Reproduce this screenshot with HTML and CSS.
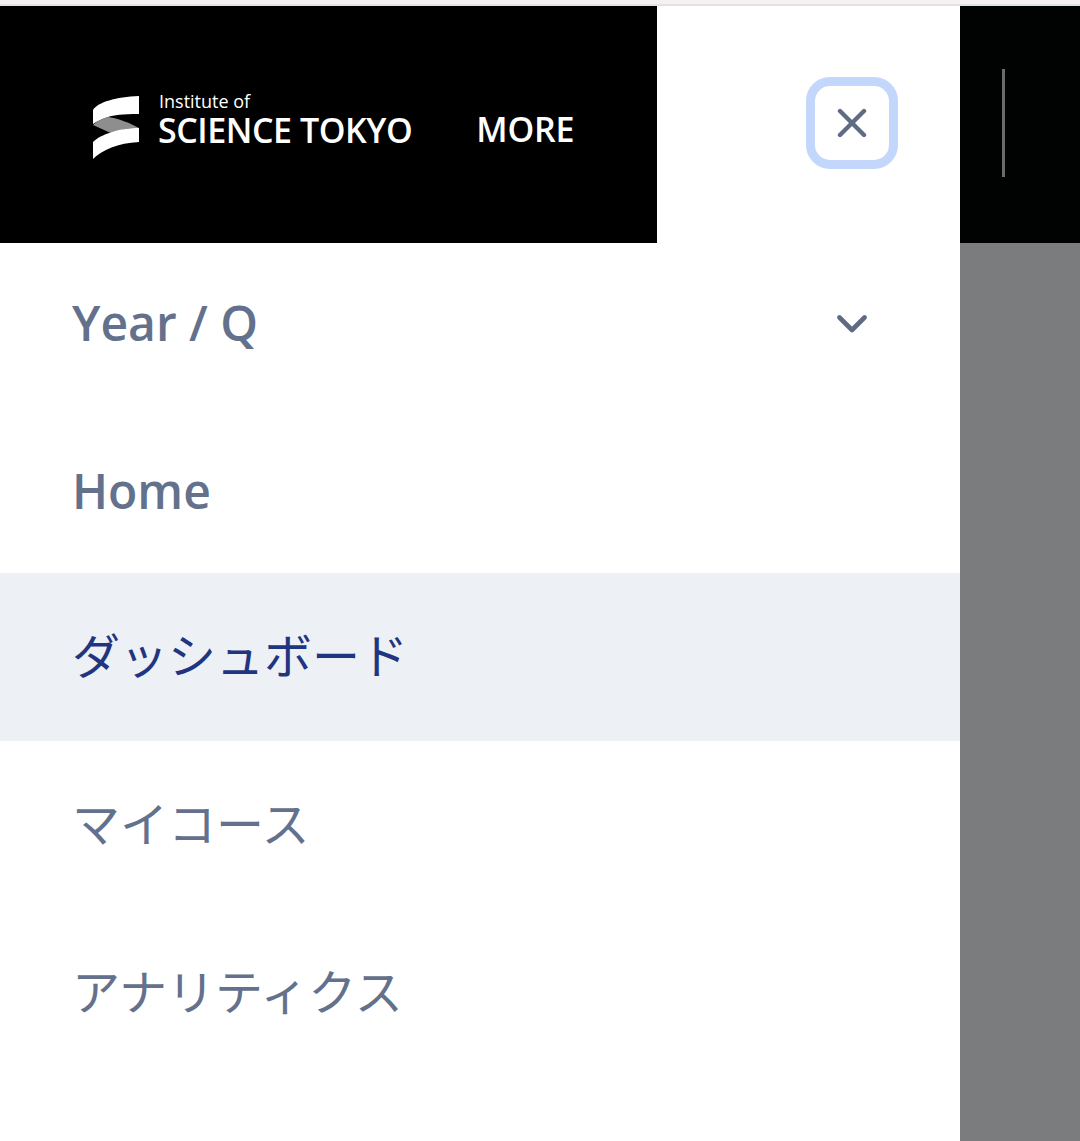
FILE: index.html
```html
<!DOCTYPE html>
<html lang="ja">
<head>
<meta charset="utf-8">
<title>Menu</title>
<link rel="stylesheet" href="styles.css">
</head>
<body>
<div class="strip"></div>
<div class="layout">
  <aside class="sidebar">
    <header class="head">
      <div class="brand">
        <svg class="mark" viewBox="0 0 48 65" width="48" height="65" aria-hidden="true">
          <path fill="#fff" d="M1 15C6 7 24 2 47 1V19C30 19 22 20 16 22C10 24 5 26 1 29Z"/>
          <path fill="#8e8e8e" d="M1 30C5 26 10 24 16 22C28 24 38 28 47 33C36 33 28 35 21 39Z"/>
          <path fill="#fff" d="M1 47C8 40 26 33 47 33V47C26 48 10 55 1 64Z"/>
        </svg>
        <div class="wordmark">
          <span class="inst">Institute of</span>
          <span class="sci">SCIENCE TOKYO</span>
        </div>
        <span class="more">MORE</span>
      </div>
      <div class="closewrap">
        <button class="close" aria-label="Close">
          <svg viewBox="0 0 30 30" width="30" height="30" aria-hidden="true"><path d="M3 3L27 27M27 3L3 27" stroke="#5f6b84" stroke-width="4.4" stroke-linecap="round" fill="none"/></svg>
        </button>
      </div>
    </header>
    <div class="row select">
      <span class="bold">Year / Q</span>
      <svg viewBox="0 0 30 18" width="30" height="18" aria-hidden="true"><path d="M2.5 2.5L15 15L27.5 2.5" stroke="#5f6b84" stroke-width="4.6" stroke-linecap="round" stroke-linejoin="round" fill="none"/></svg>
    </div>
    <nav>
      <a class="row item bold">Home</a>
      <a class="row item active">ダッシュボード</a>
      <a class="row item">マイコース</a>
      <a class="row item">アナリティクス</a>
    </nav>
  </aside>
  <div class="backdrop">
    <div class="topbar"><span class="divider"></span></div>
  </div>
</div>
</body>
</html>
```
FILE: styles.css
```css
* { box-sizing: border-box; }
html, body { margin: 0; height: 100%; overflow: hidden; }
body {
  width: 1080px;
  height: 1141px;
  background: #fff;
  font-family: "Open Sans", "Noto Sans CJK JP", sans-serif;
  display: flex;
  flex-direction: column;
}
.strip {
  height: 6px;
  background: linear-gradient(#f6f0f1 0 4px, #e4e1e4 4px);
  flex: none;
}
.layout { flex: 1; display: flex; min-height: 0; }
.sidebar { width: 960px; background: #fff; flex: none; display: flex; flex-direction: column; }
.head { height: 237px; display: flex; flex: none; }
.brand {
  width: 657px;
  background: #000;
  color: #fff;
  display: flex;
  align-items: center;
  padding: 0 0 0 92px;
}
.mark { flex: none; margin-top: 6px; }
.wordmark { display: flex; flex-direction: column; margin-left: 18px; margin-top: -10px; }
.inst { font-size: 18px; line-height: 20px; margin-left: 1px; }
.sci { font-size: 34px; line-height: 38px; font-weight: 600; white-space: nowrap; letter-spacing: -0.45px; }
.more { font-size: 34px; line-height: 38px; font-weight: 600; margin-left: 64px; margin-top: 8px; letter-spacing: -0.2px; }
.closewrap { flex: 1; display: flex; padding: 71px 0 0 149px; }
.close {
  width: 92px;
  height: 92px;
  padding: 0 1px 0 0;
  background: #fff;
  border: 9px solid #c3d6fb;
  border-radius: 24px;
  display: flex;
  align-items: center;
  justify-content: center;
}
.row { display: flex; align-items: center; color: #64718d; font-size: 48px; }
.select { height: 162px; padding: 0 93px 0 72px; justify-content: space-between; }
.select .bold { margin-top: -4px; }
.bold { font-weight: 600; }
.item {
  height: 168px;
  padding: 0 0 8px 72px;
  font-family: "Noto Sans CJK JP", "Open Sans", sans-serif;
  font-size: 48px;
  font-weight: 400;
}
.item.bold { font-family: "Open Sans", sans-serif; font-weight: 600; padding: 2px 0 0 72px; }
.item.active { background: #edf0f5; color: #1f3580; }
.backdrop { flex: 1; background: #7b7c7e; }
.topbar { height: 237px; background: #010202; padding: 63px 0 0 42px; }
.divider { display: block; width: 3px; height: 108px; background: #6a6a6a; }
```
